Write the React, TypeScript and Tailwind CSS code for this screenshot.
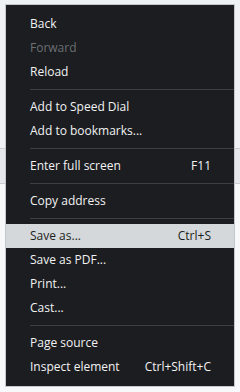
type Item = { label: string; shortcut?: string; disabled?: boolean; active?: boolean };

const groups: Item[][] = [
  [{ label: "Back" }, { label: "Forward", disabled: true }, { label: "Reload" }],
  [{ label: "Add to Speed Dial" }, { label: "Add to bookmarks..." }],
  [{ label: "Enter full screen", shortcut: "F11" }],
  [{ label: "Copy address" }],
  [
    { label: "Save as...", shortcut: "Ctrl+S", active: true },
    { label: "Save as PDF..." },
    { label: "Print..." },
    { label: "Cast..." },
  ],
  [{ label: "Page source" }, { label: "Inspect element", shortcut: "Ctrl+Shift+C" }],
];

function Row({ item }: { item: Item }) {
  const color = item.active
    ? "bg-[#d4d8db] text-[#1c1e21]"
    : item.disabled
      ? "text-[#6c6f73]"
      : "text-[#f2f2f2]";
  return (
    <div className={`flex h-6 items-center justify-between pl-6 pr-[23px] leading-6 ${color}`}>
      <span>{item.label}</span>
      {item.shortcut && <span>{item.shortcut}</span>}
    </div>
  );
}

export default function App() {
  return (
    <div
      className="relative h-[392px] w-[240px] overflow-hidden"
      style={{ fontFamily: '"Open Sans", "Noto Sans", sans-serif' }}
    >
      {/* page behind the menu */}
      <div className="flex h-full flex-col">
        <div className="h-[148px] bg-[#eef2f5]" />
        <div className="h-[36px] border-y border-[#c9ced3] bg-[#e4e8ec]" />
        <div className="flex-1 bg-[#f7f8f9]" />
      </div>

      <div className="absolute left-[5px] top-[4px] w-[230px] border border-[#c4c8cc] bg-[#1b1d21] py-[7px] text-[12px]">
        {groups.map((g, gi) => (
          <div key={gi}>
            {gi > 0 && (
              <div className="py-[5px] pl-6">
                <div className="h-px bg-[#3b3e42]" />
              </div>
            )}
            {g.map((item) => (
              <Row key={item.label} item={item} />
            ))}
          </div>
        ))}
      </div>
    </div>
  );
}
